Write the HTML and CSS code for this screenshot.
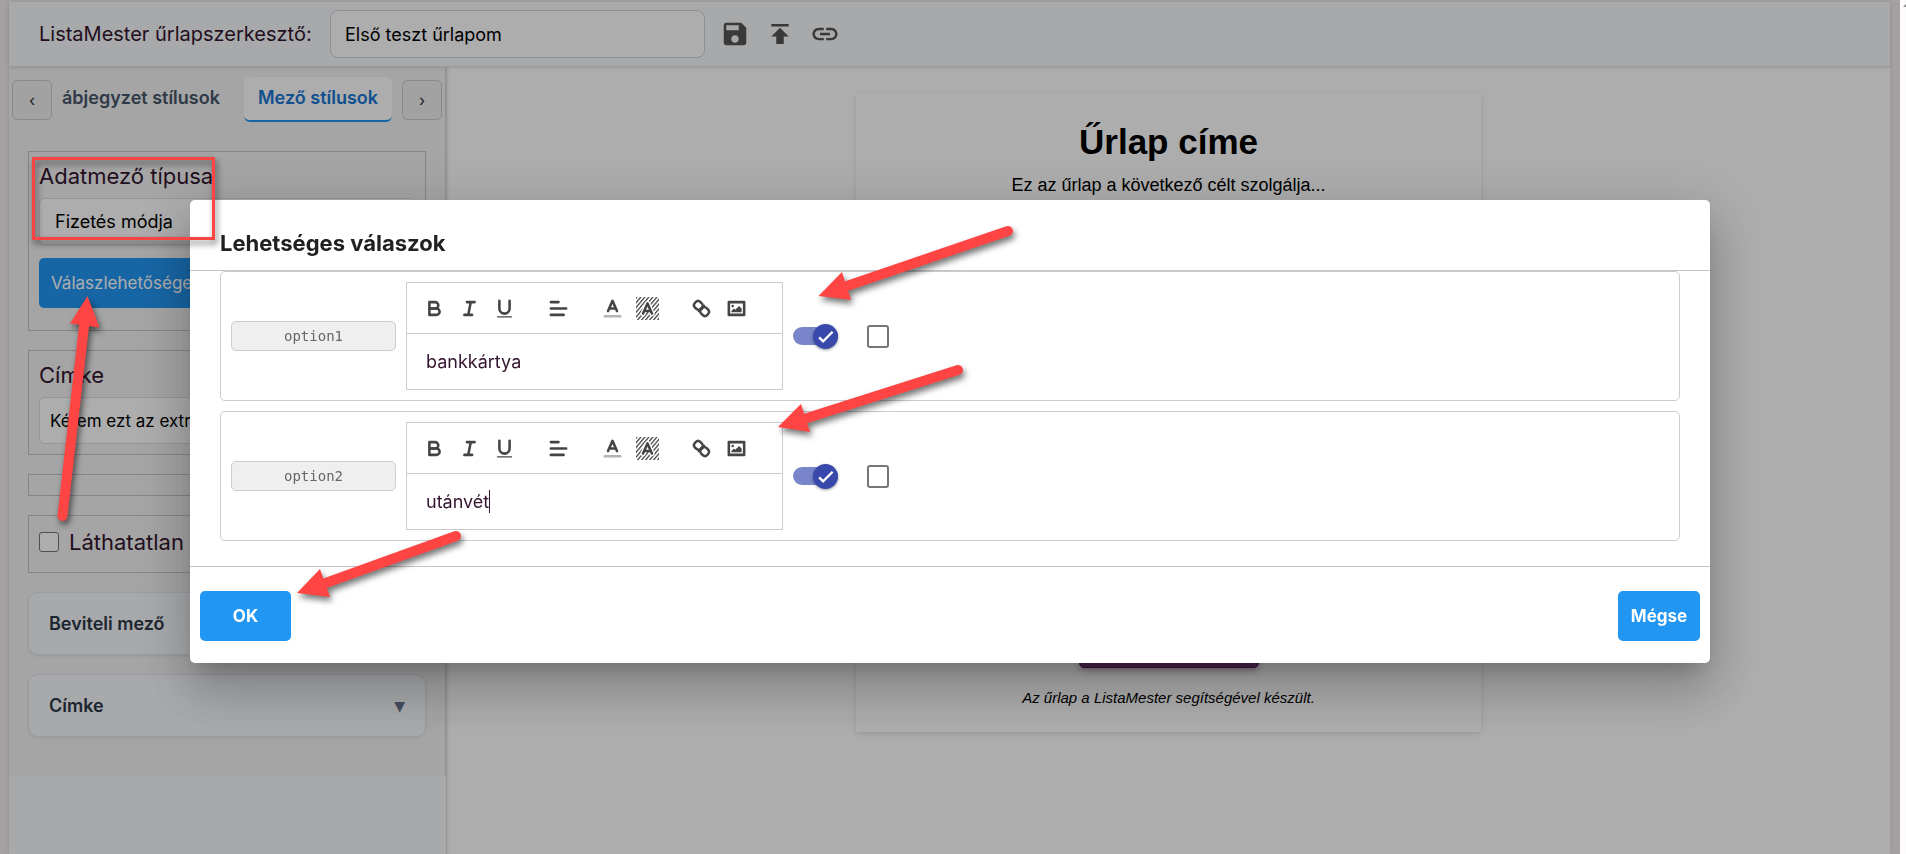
FILE: index.html
```html
<!DOCTYPE html>
<html lang="hu">
<head>
    <meta charset="UTF-8">
    <meta name="viewport" content="width=device-width, initial-scale=1.0">
    <title>ListaMester űrlapszerkesztő</title>
    <link rel="stylesheet" href="styles.css">
</head>
<body>
    <div class="app">
        <header class="topbar">
            <label class="topbar-label" for="formName">ListaMester űrlapszerkesztő:</label>
            <input type="text" class="form-name" id="formName" value="Első teszt űrlapom">
            <button type="button" class="icon-btn" aria-label="Mentés">
                <svg viewBox="0 0 24 24"><path d="M17 3H5c-1.11 0-2 .9-2 2v14c0 1.1.89 2 2 2h14c1.1 0 2-.9 2-2V7l-4-4zm-5 16c-1.66 0-3-1.34-3-3s1.34-3 3-3 3 1.34 3 3-1.34 3-3 3zm3-10H5V5h10v4z"/></svg>
            </button>
            <button type="button" class="icon-btn" aria-label="Közzététel">
                <svg viewBox="0 0 24 24"><path d="M5 4v2h14V4H5zm0 10h4v6h6v-6h4l-7-7-7 7z"/></svg>
            </button>
            <button type="button" class="icon-btn" aria-label="Hivatkozás">
                <svg viewBox="0 0 24 24"><path d="M3.9 12c0-1.71 1.39-3.1 3.1-3.1h4V7H7c-2.76 0-5 2.24-5 5s2.24 5 5 5h4v-1.9H7c-1.71 0-3.1-1.39-3.1-3.1zM8 13h8v-2H8v2zm9-6h-4v1.9h4c1.71 0 3.1 1.39 3.1 3.1s-1.39 3.1-3.1 3.1h-4V17h4c2.76 0 5-2.24 5-5s-2.24-5-5-5z"/></svg>
            </button>
        </header>

        <div class="workspace">
            <!-- Left side: style settings -->
            <aside class="sidebar">
                <div class="sidebar-panel">
                    <nav class="tabs">
                        <button type="button" class="tab-scroll">‹</button>
                        <div class="tab-list">
                            <button type="button" class="tab">ábjegyzet stílusok</button>
                            <button type="button" class="tab active">Mező stílusok</button>
                        </div>
                        <button type="button" class="tab-scroll">›</button>
                    </nav>

                    <div class="groups">
                        <div class="group">
                            <label class="group-label" for="fieldType">Adatmező típusa</label>
                            <select class="field field-select" id="fieldType">
                                <option>Fizetés módja</option>
                            </select>
                            <button type="button" class="btn btn-wide">Válaszlehetőségek</button>
                        </div>
                        <div class="group">
                            <label class="group-label" for="fieldLabel">Címke</label>
                            <input type="text" class="field" id="fieldLabel" value="Kérem ezt az extra">
                        </div>
                        <div class="group group-empty"></div>
                        <div class="group group-check">
                            <input type="checkbox" class="box" id="hiddenField">
                            <label for="hiddenField">Láthatatlan</label>
                        </div>
                        <button type="button" class="accordion"><span>Beviteli mező</span><span class="caret">▼</span></button>
                        <button type="button" class="accordion"><span>Címke</span><span class="caret">▼</span></button>
                    </div>
                </div>
            </aside>

            <!-- Form preview -->
            <main class="preview">
                <section class="form-card">
                    <div>
                        <h1>Űrlap címe</h1>
                        <p class="intro">Ez az űrlap a következő célt szolgálja...</p>
                    </div>
                    <div>
                        <button type="button" class="send" aria-label="Küldés"></button>
                        <p class="footnote">Az űrlap a ListaMester segítségével készült.</p>
                    </div>
                </section>
            </main>
        </div>
    </div>
    <div class="scroll-edge"></div>

    <!-- Dialog with the possible answers -->
    <div class="overlay">
        <div class="dialog" role="dialog" aria-labelledby="dialogTitle">
            <h2 class="dialog-title" id="dialogTitle">Lehetséges válaszok</h2>
            <div class="dialog-body">
                <div class="answer">
                    <input type="text" class="option-key" value="option1" aria-label="Kulcs 1" disabled>
                    <div class="editor">
                        <div class="toolbar">
                            <div class="tools">
                                <button type="button" aria-label="Félkövér"><svg viewBox="0 0 18 18"><use href="#i-bold"/></svg></button>
                                <button type="button" aria-label="Dőlt"><svg viewBox="0 0 18 18"><use href="#i-italic"/></svg></button>
                                <button type="button" aria-label="Aláhúzott"><svg viewBox="0 0 18 18"><use href="#i-underline"/></svg></button>
                            </div>
                            <div class="tools">
                                <button type="button" aria-label="Igazítás"><svg viewBox="0 0 18 18"><use href="#i-align"/></svg></button>
                            </div>
                            <div class="tools">
                                <button type="button" aria-label="Betűszín"><svg viewBox="0 0 18 18"><use href="#i-color"/></svg></button>
                                <button type="button" aria-label="Háttérszín"><svg viewBox="0 0 18 18"><use href="#i-background"/></svg></button>
                            </div>
                            <div class="tools">
                                <button type="button" aria-label="Link"><svg viewBox="0 0 18 18"><use href="#i-link"/></svg></button>
                                <button type="button" aria-label="Kép"><svg viewBox="0 0 18 18"><use href="#i-image"/></svg></button>
                            </div>
                        </div>
                        <div class="editor-text" contenteditable="true">bankkártya</div>
                    </div>
                    <label class="switch">
                        <input type="checkbox" aria-label="Aktív 1" checked>
                        <span class="thumb"><svg viewBox="0 0 24 24"><path d="M4 13l5 5L21 6"/></svg></span>
                    </label>
                    <input type="checkbox" class="box box-large" aria-label="Kijelölés 1">
                </div>

                <div class="answer">
                    <input type="text" class="option-key" value="option2" aria-label="Kulcs 2" disabled>
                    <div class="editor">
                        <div class="toolbar">
                            <div class="tools">
                                <button type="button" aria-label="Félkövér"><svg viewBox="0 0 18 18"><use href="#i-bold"/></svg></button>
                                <button type="button" aria-label="Dőlt"><svg viewBox="0 0 18 18"><use href="#i-italic"/></svg></button>
                                <button type="button" aria-label="Aláhúzott"><svg viewBox="0 0 18 18"><use href="#i-underline"/></svg></button>
                            </div>
                            <div class="tools">
                                <button type="button" aria-label="Igazítás"><svg viewBox="0 0 18 18"><use href="#i-align"/></svg></button>
                            </div>
                            <div class="tools">
                                <button type="button" aria-label="Betűszín"><svg viewBox="0 0 18 18"><use href="#i-color"/></svg></button>
                                <button type="button" aria-label="Háttérszín"><svg viewBox="0 0 18 18"><use href="#i-background"/></svg></button>
                            </div>
                            <div class="tools">
                                <button type="button" aria-label="Link"><svg viewBox="0 0 18 18"><use href="#i-link"/></svg></button>
                                <button type="button" aria-label="Kép"><svg viewBox="0 0 18 18"><use href="#i-image"/></svg></button>
                            </div>
                        </div>
                        <div class="editor-text" contenteditable="true">utánvét<span class="cursor"></span></div>
                    </div>
                    <label class="switch">
                        <input type="checkbox" aria-label="Aktív 2" checked>
                        <span class="thumb"><svg viewBox="0 0 24 24"><path d="M4 13l5 5L21 6"/></svg></span>
                    </label>
                    <input type="checkbox" class="box box-large" aria-label="Kijelölés 2">
                </div>
            </div>
            <div class="dialog-actions">
                <button type="button" class="btn btn-ok">OK</button>
                <button type="button" class="btn btn-cancel">Mégse</button>
            </div>
        </div>
    </div>

    <!-- Marks drawn over the page -->
    <svg class="marks" width="1040" height="640" viewBox="0 0 1040 640">
        <rect x="33.5" y="158.5" width="180" height="80"/>
        <path d="M62.500 516L84.500 322"/>
        <polygon points="87.500,296 70,323.500 99.500,327.500"/>
        <path d="M1008 231L844 287"/>
        <polygon points="818.500,296 842,272 851,300"/>
        <path d="M958 370L804 419"/>
        <polygon points="778,427 801,404 810,432"/>
        <path d="M456 536L323 584"/>
        <polygon points="297,593 320,569 330,597"/>
    </svg>

    <!-- Toolbar icons -->
    <svg class="sprite" width="0" height="0">
        <defs>
            <pattern id="hatch" width="2.400" height="2.400" patternUnits="userSpaceOnUse" patternTransform="rotate(40)">
                <rect width="1" height="2.400" fill="#444"/>
            </pattern>
            <g id="i-bold">
                <path d="M5,4H9.500A2.500,2.500,0,0,1,12,6.500v0A2.500,2.500,0,0,1,9.500,9H5V4Z"/>
                <path d="M5,9h5.500A2.500,2.500,0,0,1,13,11.500v0A2.500,2.500,0,0,1,10.500,14H5V9Z"/>
            </g>
            <g id="i-italic"><path d="M7,4H13M5,14H11M8,14L10,4"/></g>
            <g id="i-underline">
                <path d="M5,3V9a4,4,0,0,0,8,0V3"/>
                <rect class="fill" x="3" y="15" width="12" height="1" rx="0.500"/>
            </g>
            <g id="i-align"><path d="M3,9H15M3,14H13M3,4H9"/></g>
            <g id="i-color">
                <path opacity="0.400" d="M3,15H15"/>
                <path d="M5.500,11L9,3L12.500,11M11.600,9H6.400"/>
            </g>
            <g id="i-background">
                <rect x="0" y="0" width="18" height="18" fill="url(#hatch)" stroke="none"/>
                <path class="halo" d="M5.500,13L9,5L12.500,13"/>
                <path d="M5.500,13L9,5L12.500,13M11.600,11H6.400"/>
            </g>
            <g id="i-link">
                <path d="M7,11L11,7"/>
                <path d="M8.900,4.577a3.476,3.476,0,0,1,.36,4.679A3.476,3.476,0,0,1,4.577,8.900C3.185,7.500,2.035,6.400,4.217,4.217S7.500,3.185,8.900,4.577Z"/>
                <path d="M13.423,9.100a3.476,3.476,0,0,0-4.679-.36,3.476,3.476,0,0,0,.36,4.679c1.392,1.392,2.500,2.542,4.679.36S14.815,10.500,13.423,9.100Z"/>
            </g>
            <g id="i-image">
                <rect x="3" y="4" width="12" height="10"/>
                <circle class="fill" cx="6" cy="7" r="1"/>
                <polygon class="fill" points="5 12 5 11 7 9 8 10 11 7 13 9 13 12"/>
            </g>
        </defs>
    </svg>
</body>
</html>
```

FILE: styles.css
```css
* {
    box-sizing: border-box;
}

body {
    display: flex;
    min-height: 100vh;
    margin: 0;
    overflow: hidden;
    font-family: Inter, "Open Sans", sans-serif;
    font-size: 16px;
    color: #34152f;
    background-color: #f4edf0;
}

button, input, select {
    font-family: inherit;
    font-size: 16px;
}

h1, h2, p {
    margin: 0;
}

.app {
    flex: 1;
    display: flex;
    flex-direction: column;
    margin: 2px 10px 0 9px;
    background-color: #fff;
    box-shadow: 0 0 8px rgba(0, 0, 0, 0.08);
}

/* Strip at the right edge of the window */
.scroll-edge {
    position: relative;
    z-index: 3;
    width: 6px;
    background-color: #fcfcfc;
}

.scroll-edge::before {
    content: "";
    position: absolute;
    top: 4px;
    right: 0;
    border-left: 3px solid transparent;
    border-bottom: 3px solid #888;
}

/* Top bar */
.topbar {
    position: relative;
    display: flex;
    align-items: center;
    height: 65px;
    padding-left: 30px;
    background-color: #f6f9fc;
    border-bottom: 1px solid #dde2e8;
    box-shadow: 0 1px 3px rgba(0, 0, 0, 0.1);
}

.topbar-label {
    width: 291px;
    font-size: 20px;
    white-space: nowrap;
}

.form-name {
    width: 375px;
    height: 48px;
    margin-right: 15px;
    padding: 0 14px;
    font-size: 18px;
    color: #000;
    background-color: #fff;
    border: 1px solid #ced4da;
    border-radius: 8px;
}

.icon-btn {
    width: 30px;
    height: 30px;
    margin-right: 15px;
    padding: 0;
    background: none;
    border: none;
}

.icon-btn svg {
    display: block;
    width: 30px;
    height: 30px;
    fill: #555;
}

.workspace {
    flex: 1;
    display: flex;
}

/* Sidebar */
.sidebar {
    width: 438px;
    background-color: #f6f9fc;
    border-right: 1px solid #ddd;
    box-shadow: 1px 0 3px rgba(0, 0, 0, 0.1);
}

.sidebar-panel {
    padding-bottom: 39px;
    background-color: #f3f3f3;
    border-right: 1px solid #d8d8d8;
}

.tabs {
    display: flex;
    align-items: center;
    justify-content: space-between;
    height: 65px;
    padding: 0 3px;
}

.tab-scroll {
    width: 40px;
    height: 40px;
    padding: 0;
    color: #333;
    background-color: #efefef;
    border: 1px solid #ccc;
    border-radius: 5px;
}

.tab-list {
    flex: 1;
    display: flex;
    justify-content: space-between;
    margin: 0 10px;
}

.tab {
    height: 45px;
    padding: 0 0 3px;
    font-size: 18px;
    font-weight: 600;
    color: #475569;
    background: none;
    border: none;
    border-bottom: 2px solid transparent;
    white-space: nowrap;
}

.tab.active {
    width: 148px;
    color: #1976d2;
    background-color: #fff;
    border-bottom-color: #2196f3;
    border-radius: 6px;
}

.groups {
    display: flex;
    flex-direction: column;
    gap: 19px;
    padding: 19px 19px 0 19px;
}

.group {
    display: flex;
    flex-direction: column;
    padding: 9px 10px 10px;
    border: 1px solid #c4c4c4;
}

.group-label {
    height: 37px;
    font-size: 22px;
    line-height: 30px;
}

.group-empty {
    height: 22px;
    padding: 0;
}

.group-check {
    flex-direction: row;
    align-items: center;
    gap: 10px;
    height: 58px;
    padding-bottom: 14px;
    font-size: 22px;
}

.field {
    height: 47px;
    padding: 0 10px;
    font-size: 17px;
    color: #000;
    background-color: #fff;
    border: 1px solid #ddd;
    border-radius: 5px;
}

.field-select {
    appearance: none;
    padding-left: 15px;
    font-size: 18px;
}

.btn {
    height: 50px;
    padding: 0 12px;
    font-size: 17px;
    color: #fff;
    background-color: #2196f3;
    border: none;
    border-radius: 5px;
    white-space: nowrap;
}

.btn-wide {
    width: 200px;
    margin: 13px 0 12px;
    text-align: left;
}

.box {
    appearance: none;
    flex-shrink: 0;
    width: 20px;
    height: 20px;
    margin: 0;
    background-color: #fff;
    border: 1px solid #767676;
    border-radius: 3px;
}

.accordion {
    display: flex;
    justify-content: space-between;
    align-items: center;
    height: 63px;
    padding: 0 20px;
    font-size: 18px;
    font-weight: 600;
    color: #2d3748;
    background-color: #f7fafc;
    border: 1px solid #e2e8f0;
    border-radius: 10px;
    box-shadow: 0 1px 3px rgba(0, 0, 0, 0.08);
}

.caret {
    font-family: "DejaVu Sans", sans-serif;
    font-size: 14px;
    font-weight: 400;
    color: #64748b;
}

/* Preview */
.preview {
    flex: 1;
    padding-top: 27px;
    color: #000;
    font-family: "Liberation Sans", Arial, sans-serif;
    text-align: center;
}

.form-card {
    display: flex;
    flex-direction: column;
    justify-content: space-between;
    width: 625px;
    min-height: 638px;
    margin: 0 auto;
    padding: 26px 20px 22px;
    box-shadow: 0 2px 6px rgba(0, 0, 0, 0.12);
}

.form-card h1 {
    font-size: 35px;
    line-height: 44px;
}

.intro {
    margin-top: 9px;
    font-size: 18px;
    line-height: 24px;
}

.send {
    width: 180px;
    height: 50px;
    background-color: #743573;
    border: 1px solid #5c1a5a;
    border-radius: 5px;
    box-shadow: 0 3px 6px rgba(116, 53, 115, 0.4);
}

.footnote {
    margin-top: 16px;
    font-size: 15px;
    font-style: italic;
    line-height: 24px;
}

/* Dialog */
.overlay {
    position: fixed;
    top: 0;
    right: 6px;
    bottom: 0;
    left: 0;
    z-index: 2;
    display: flex;
    align-items: flex-start;
    justify-content: center;
    padding-top: 200px;
    background-color: rgba(0, 0, 0, 0.32);
}

.dialog {
    width: 80%;
    background-color: #fff;
    border-radius: 5px;
    box-shadow: 0 14px 19px -9px rgba(0, 0, 0, 0.2), 0 30px 48px 4px rgba(0, 0, 0, 0.14), 0 11px 58px 10px rgba(0, 0, 0, 0.12);
}

.dialog-title {
    height: 71px;
    padding: 24px 30px 0;
    font-size: 22px;
    font-weight: 700;
    line-height: 38px;
    color: #212121;
    border-bottom: 1px solid #c9c4c7;
}

.dialog-body {
    display: flex;
    flex-direction: column;
    gap: 10px;
    padding: 0 30px 25px;
    border-bottom: 1px solid #c9c4c7;
}

.answer {
    display: flex;
    align-items: center;
    gap: 10px;
    padding: 10px;
    border: 1px solid #ccc;
    border-radius: 5px;
}

.option-key {
    width: 165px;
    height: 30px;
    font-family: "DejaVu Sans Mono", monospace;
    font-size: 14px;
    text-align: center;
    color: #666;
    background-color: #efefef;
    border: 1px solid #ccc;
    border-radius: 5px;
}

.editor {
    width: 377px;
    border: 1px solid #ccc;
}

.toolbar {
    display: flex;
    gap: 19px;
    padding: 10px;
    border-bottom: 1px solid #ccc;
}

.tools {
    display: flex;
}

.tools button {
    width: 35px;
    height: 30px;
    padding: 4px 6px;
    background: none;
    border: none;
}

.tools svg {
    display: block;
    width: 23px;
    height: 23px;
    fill: none;
    stroke: #444;
    stroke-width: 2;
    stroke-linecap: round;
    stroke-linejoin: round;
}

.fill {
    fill: #444;
    stroke: none;
}

.halo {
    stroke: #fff;
    stroke-width: 4;
}

.editor-text {
    display: flex;
    align-items: center;
    height: 55px;
    padding: 0 19px;
    font-size: 18px;
    outline: none;
}

.cursor {
    width: 1px;
    height: 23px;
    background-color: #34152f;
}

.switch {
    display: flex;
    align-items: center;
    justify-content: flex-end;
    width: 45px;
    height: 18px;
    margin-right: 19px;
    background-color: #7985cb;
    border-radius: 9px;
}

.switch input {
    appearance: none;
    margin: 0;
}

.thumb {
    width: 25px;
    height: 25px;
    padding: 3px;
    background-color: #3949ab;
    border-radius: 50%;
    box-shadow: 0 1px 3px rgba(0, 0, 0, 0.4);
}

.thumb svg {
    display: block;
    width: 19px;
    height: 19px;
    fill: none;
    stroke: #fff;
    stroke-width: 3;
}

.box-large {
    width: 22px;
    height: 23px;
    border-width: 2px;
}

.dialog-actions {
    display: flex;
    justify-content: space-between;
    padding: 24px 10px 22px;
}

.dialog-actions .btn {
    font-weight: 700;
}

.btn-ok {
    width: 91px;
}

.btn-cancel {
    width: 82px;
}

/* Arrows and frame over the page */
.marks {
    position: absolute;
    top: 0;
    left: 0;
    z-index: 4;
    pointer-events: none;
    fill: #ff4444;
    filter: drop-shadow(2px 4px 3px rgba(0, 0, 0, 0.55));
}

.marks path {
    stroke: #ff4444;
    stroke-width: 10;
    stroke-linecap: round;
}

.marks rect {
    fill: none;
    stroke: #ff4444;
    stroke-width: 3;
}

.sprite {
    position: absolute;
}
```
